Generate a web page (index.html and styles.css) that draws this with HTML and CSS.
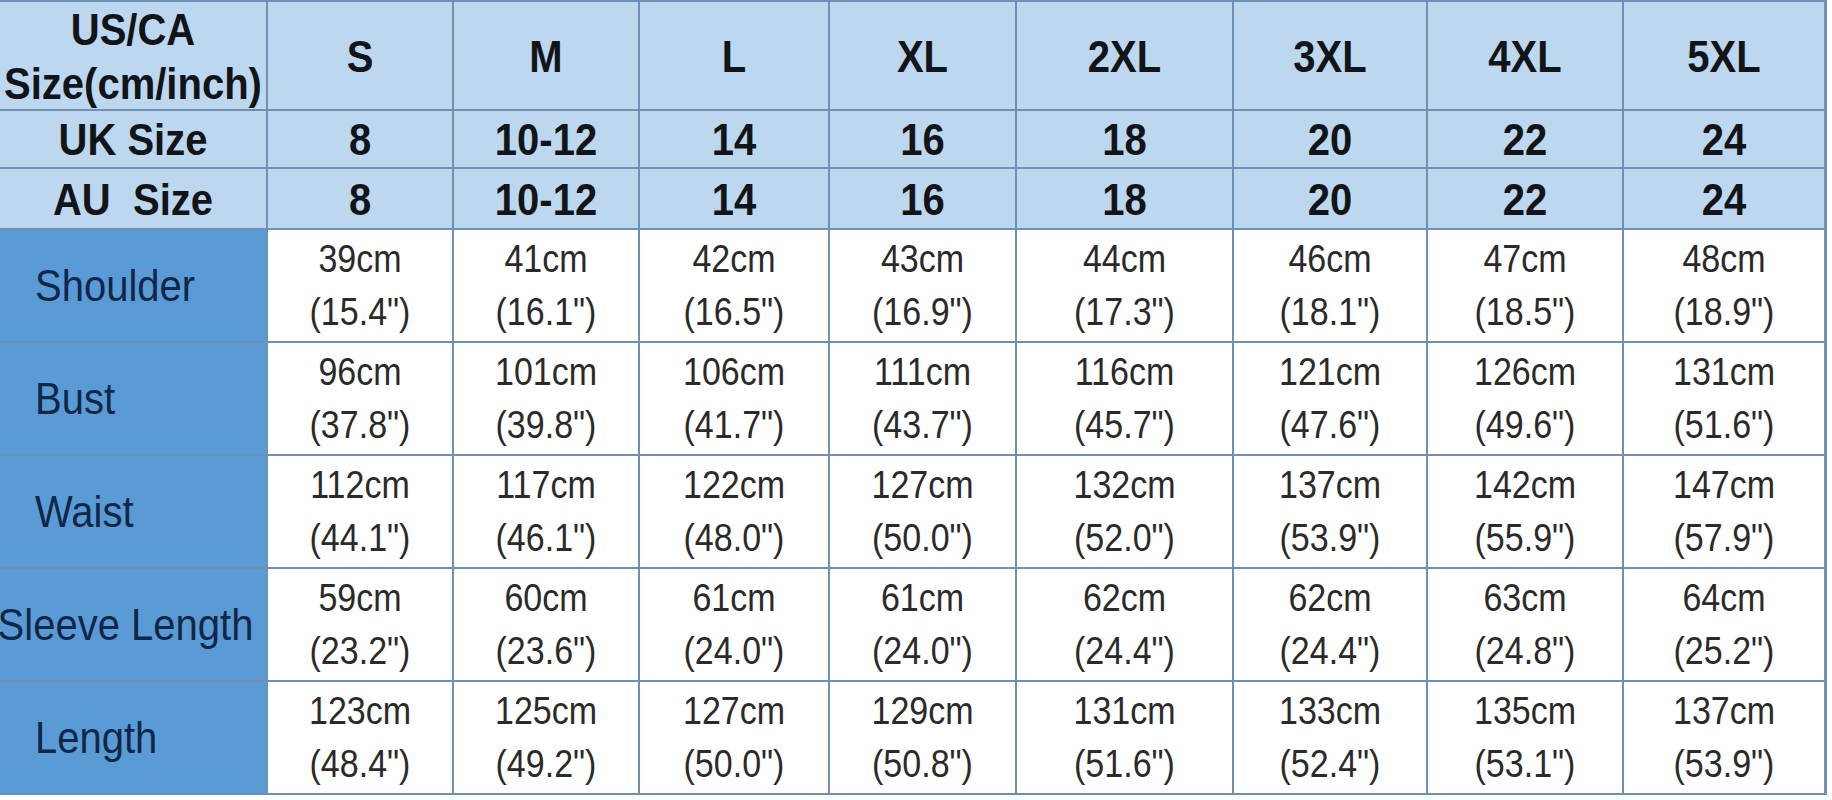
FILE: index.html
```html
<!DOCTYPE html>
<html>
<head>
<meta charset="utf-8">
<link rel="stylesheet" href="styles.css">
</head>
<body>
<div class="sheet">
  <div class="cell head label-head"><span class="t">US/CA</span><span class="t">Size(cm/inch)</span></div>
  <div class="cell head"><span class="t">S</span></div>
  <div class="cell head"><span class="t">M</span></div>
  <div class="cell head"><span class="t">L</span></div>
  <div class="cell head"><span class="t">XL</span></div>
  <div class="cell head"><span class="t">2XL</span></div>
  <div class="cell head"><span class="t">3XL</span></div>
  <div class="cell head"><span class="t">4XL</span></div>
  <div class="cell head"><span class="t">5XL</span></div>

  <div class="cell head"><span class="t">UK Size</span></div>
  <div class="cell head"><span class="t">8</span></div>
  <div class="cell head"><span class="t">10-12</span></div>
  <div class="cell head"><span class="t">14</span></div>
  <div class="cell head"><span class="t">16</span></div>
  <div class="cell head"><span class="t">18</span></div>
  <div class="cell head"><span class="t">20</span></div>
  <div class="cell head"><span class="t">22</span></div>
  <div class="cell head"><span class="t">24</span></div>

  <div class="cell head"><span class="t">AU&nbsp;&nbsp;Size</span></div>
  <div class="cell head"><span class="t">8</span></div>
  <div class="cell head"><span class="t">10-12</span></div>
  <div class="cell head"><span class="t">14</span></div>
  <div class="cell head"><span class="t">16</span></div>
  <div class="cell head"><span class="t">18</span></div>
  <div class="cell head"><span class="t">20</span></div>
  <div class="cell head"><span class="t">22</span></div>
  <div class="cell head"><span class="t">24</span></div>

  <div class="cell label"><span class="t">Shoulder</span></div>
  <div class="cell data"><span class="t">39cm</span><span class="t">(15.4")</span></div>
  <div class="cell data"><span class="t">41cm</span><span class="t">(16.1")</span></div>
  <div class="cell data"><span class="t">42cm</span><span class="t">(16.5")</span></div>
  <div class="cell data"><span class="t">43cm</span><span class="t">(16.9")</span></div>
  <div class="cell data"><span class="t">44cm</span><span class="t">(17.3")</span></div>
  <div class="cell data"><span class="t">46cm</span><span class="t">(18.1")</span></div>
  <div class="cell data"><span class="t">47cm</span><span class="t">(18.5")</span></div>
  <div class="cell data"><span class="t">48cm</span><span class="t">(18.9")</span></div>

  <div class="cell label"><span class="t">Bust</span></div>
  <div class="cell data"><span class="t">96cm</span><span class="t">(37.8")</span></div>
  <div class="cell data"><span class="t">101cm</span><span class="t">(39.8")</span></div>
  <div class="cell data"><span class="t">106cm</span><span class="t">(41.7")</span></div>
  <div class="cell data"><span class="t">111cm</span><span class="t">(43.7")</span></div>
  <div class="cell data"><span class="t">116cm</span><span class="t">(45.7")</span></div>
  <div class="cell data"><span class="t">121cm</span><span class="t">(47.6")</span></div>
  <div class="cell data"><span class="t">126cm</span><span class="t">(49.6")</span></div>
  <div class="cell data"><span class="t">131cm</span><span class="t">(51.6")</span></div>

  <div class="cell label"><span class="t">Waist</span></div>
  <div class="cell data"><span class="t">112cm</span><span class="t">(44.1")</span></div>
  <div class="cell data"><span class="t">117cm</span><span class="t">(46.1")</span></div>
  <div class="cell data"><span class="t">122cm</span><span class="t">(48.0")</span></div>
  <div class="cell data"><span class="t">127cm</span><span class="t">(50.0")</span></div>
  <div class="cell data"><span class="t">132cm</span><span class="t">(52.0")</span></div>
  <div class="cell data"><span class="t">137cm</span><span class="t">(53.9")</span></div>
  <div class="cell data"><span class="t">142cm</span><span class="t">(55.9")</span></div>
  <div class="cell data"><span class="t">147cm</span><span class="t">(57.9")</span></div>

  <div class="cell label label-wide"><span class="t">Sleeve Length</span></div>
  <div class="cell data"><span class="t">59cm</span><span class="t">(23.2")</span></div>
  <div class="cell data"><span class="t">60cm</span><span class="t">(23.6")</span></div>
  <div class="cell data"><span class="t">61cm</span><span class="t">(24.0")</span></div>
  <div class="cell data"><span class="t">61cm</span><span class="t">(24.0")</span></div>
  <div class="cell data"><span class="t">62cm</span><span class="t">(24.4")</span></div>
  <div class="cell data"><span class="t">62cm</span><span class="t">(24.4")</span></div>
  <div class="cell data"><span class="t">63cm</span><span class="t">(24.8")</span></div>
  <div class="cell data"><span class="t">64cm</span><span class="t">(25.2")</span></div>

  <div class="cell label"><span class="t">Length</span></div>
  <div class="cell data"><span class="t">123cm</span><span class="t">(48.4")</span></div>
  <div class="cell data"><span class="t">125cm</span><span class="t">(49.2")</span></div>
  <div class="cell data"><span class="t">127cm</span><span class="t">(50.0")</span></div>
  <div class="cell data"><span class="t">129cm</span><span class="t">(50.8")</span></div>
  <div class="cell data"><span class="t">131cm</span><span class="t">(51.6")</span></div>
  <div class="cell data"><span class="t">133cm</span><span class="t">(52.4")</span></div>
  <div class="cell data"><span class="t">135cm</span><span class="t">(53.1")</span></div>
  <div class="cell data"><span class="t">137cm</span><span class="t">(53.9")</span></div>
</div>
</body>
</html>
```

FILE: styles.css
```css
html, body {
  margin: 0;
  padding: 0;
  background: #ffffff;
}

body {
  width: 1832px;
  height: 800px;
  overflow: hidden;
  font-family: "Liberation Sans", Arial, sans-serif;
}

.sheet {
  display: grid;
  grid-template-columns: 266px 184px 184px 188px 185px 215px 192px 194px 200px;
  grid-template-rows: 107px 56px 59px 111px 111px 111px 111px 111px;
  column-gap: 2px;
  row-gap: 2px;
  width: max-content;
  padding: 2px 3px 2px 0;
  background: #6f8fb5;
}

.cell {
  display: flex;
  flex-direction: column;
  align-items: center;
  justify-content: center;
  overflow: visible;
  white-space: nowrap;
}

.t {
  display: inline-block;
  transform: scaleY(1.13);
}

.head {
  background: #bdd7ee;
  color: #111418;
  font-weight: bold;
  font-size: 40px;
  line-height: 50px;
}

.label-head {
  line-height: 54px;
}

.label {
  background: #5b9bd5;
  color: #0f2749;
  font-size: 40px;
  align-items: flex-start;
  padding-left: 35px;
}

.label-wide {
  align-items: center;
  padding-left: 0;
  margin-left: -15px;
}

.data {
  background: #ffffff;
  color: #2a2a2a;
  font-size: 34px;
  line-height: 53px;
}
```
